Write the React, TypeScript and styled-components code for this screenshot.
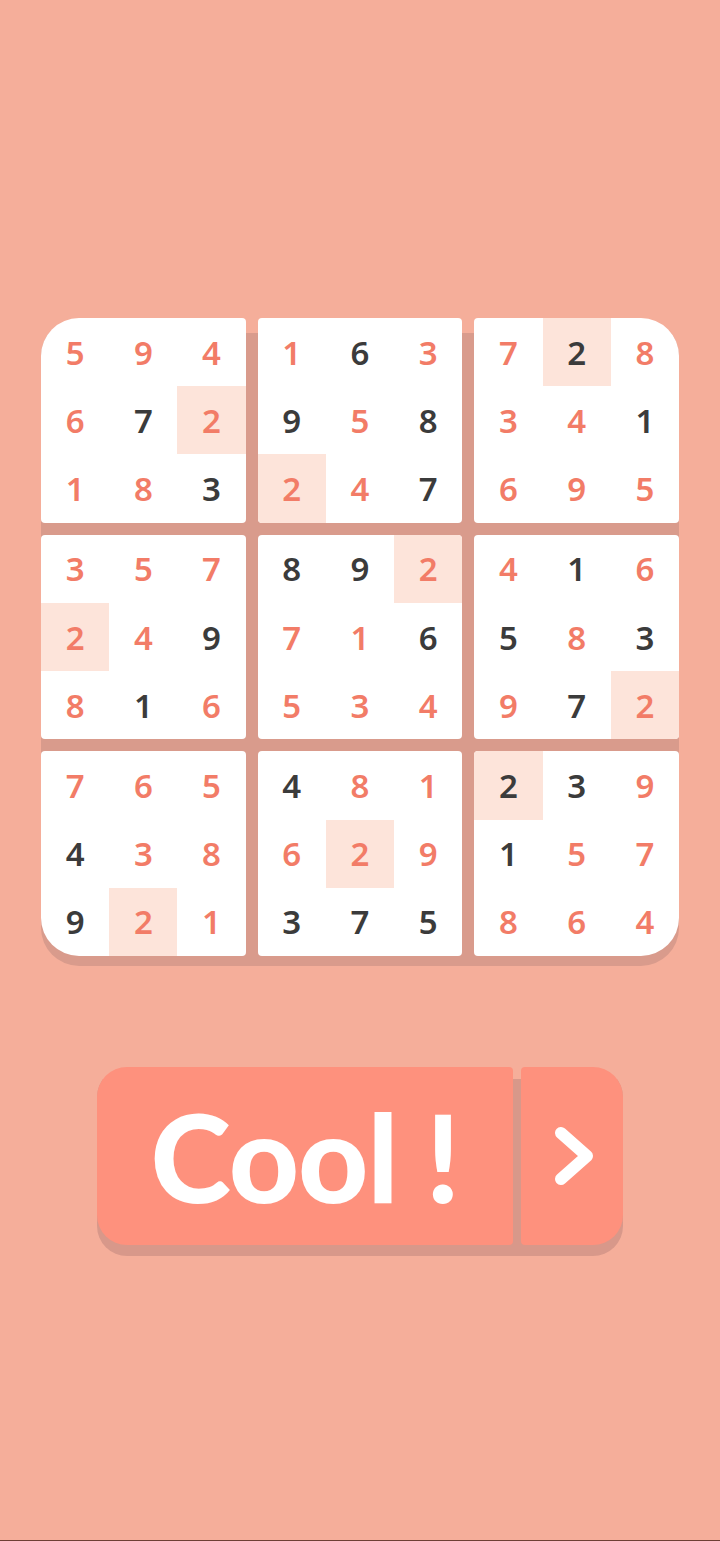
import React, { FC } from 'react';
import styled, { createGlobalStyle } from 'styled-components';

const GlobalStyle = createGlobalStyle`
    html, body {
        margin: 0;
        padding: 0;
        background: #f5ae9a;
    }
`;

const Page = styled.div`
    height: 1541px;
    box-sizing: border-box;
    padding-top: 318px;
    display: flex;
    flex-direction: column;
    align-items: center;
    font-family: 'Noto Sans', Roboto, sans-serif;
`;

const Board = styled.div`
    width: 638px;
    display: grid;
    grid-template-columns: repeat(3, 1fr);
    gap: 12px;
    padding-bottom: 10px;
    border-radius: 38px;
    background: linear-gradient(to bottom, transparent 15px, #d99b8c 15px);
`;

const Box = styled.div<{ $radius: string }>`
    aspect-ratio: 1;
    background: #ffffff;
    border-radius: ${(p) => p.$radius};
    overflow: hidden;
    display: grid;
    grid-template-columns: repeat(3, 1fr);
    grid-template-rows: repeat(3, 1fr);
`;

const Cell = styled.div<{ $dark: boolean; $hl: boolean }>`
    display: flex;
    align-items: center;
    justify-content: center;
    font-size: 33px;
    font-weight: 600;
    color: ${(p) => (p.$dark ? '#3b3b3b' : '#f27c67')};
    background: ${(p) => (p.$hl ? '#fde4da' : 'transparent')};
`;

const ButtonRow = styled.div`
    margin-top: 101px;
    width: 526px;
    display: grid;
    grid-template-columns: 1fr 102px;
    gap: 8px;
    padding-bottom: 11px;
    border-radius: 30px;
    background: linear-gradient(to bottom, transparent 12px, #d8988a 12px);
`;

const MainButton = styled.button`
    height: 178px;
    border: none;
    padding: 0;
    border-radius: 30px 4px 4px 30px;
    background: #fe917d;
    color: #ffffff;
    font-family: Lato, 'Noto Sans', sans-serif;
    font-weight: 900;
    font-size: 122px;
    letter-spacing: -1px;
    display: flex;
    align-items: center;
    justify-content: center;
`;

const NextButton = styled.button`
    height: 178px;
    border: none;
    padding: 0 0 0 4px;
    border-radius: 4px 30px 30px 4px;
    background: #fe917d;
    display: flex;
    align-items: center;
    justify-content: center;
`;

const BottomLine = styled.div`
    margin-top: auto;
    align-self: stretch;
    height: 1px;
    background: #6e3f35;
`;

// "d" = dark digit, "*" = highlighted cell, default orange
const boxes = [
    '5 9 4 6 7d 2* 1 8 3d',
    '1 6d 3 9d 5 8d 2* 4 7d',
    '7 2d* 8 3 4 1d 6 9 5',
    '3 5 7 2* 4 9d 8 1d 6',
    '8d 9d 2* 7 1 6d 5 3 4',
    '4 1d 6 5d 8 3d 9 7d 2*',
    '7 6 5 4d 3 8 9d 2* 1',
    '4d 8 1 6 2* 9 3d 7d 5d',
    '2d* 3d 9 1d 5 7 8 6 4',
];

const corners: Record<number, string> = {
    0: '38px 4px 4px 4px',
    2: '4px 38px 4px 4px',
    6: '4px 4px 4px 38px',
    8: '4px 4px 38px 4px',
};

export default function App() {
    return (
        <Page>
            <GlobalStyle />
            <Board>
                {boxes.map((box, i) => (
                    <Box key={i} $radius={corners[i] ?? '4px'}>
                        {box.split(' ').map((tok, j) => (
                            <Cell key={j} $dark={tok.includes('d')} $hl={tok.includes('*')}>
                                {tok[0]}
                            </Cell>
                        ))}
                    </Box>
                ))}
            </Board>
            <ButtonRow>
                <MainButton>Cool !</MainButton>
                <NextButton>
                    <svg width="42" height="62" viewBox="0 0 42 62">
                        <polyline
                            points="8,8 34,31 8,54"
                            fill="none"
                            stroke="#ffffff"
                            strokeWidth="12"
                            strokeLinecap="round"
                            strokeLinejoin="round"
                        />
                    </svg>
                </NextButton>
            </ButtonRow>
            <BottomLine />
        </Page>
    );
}
